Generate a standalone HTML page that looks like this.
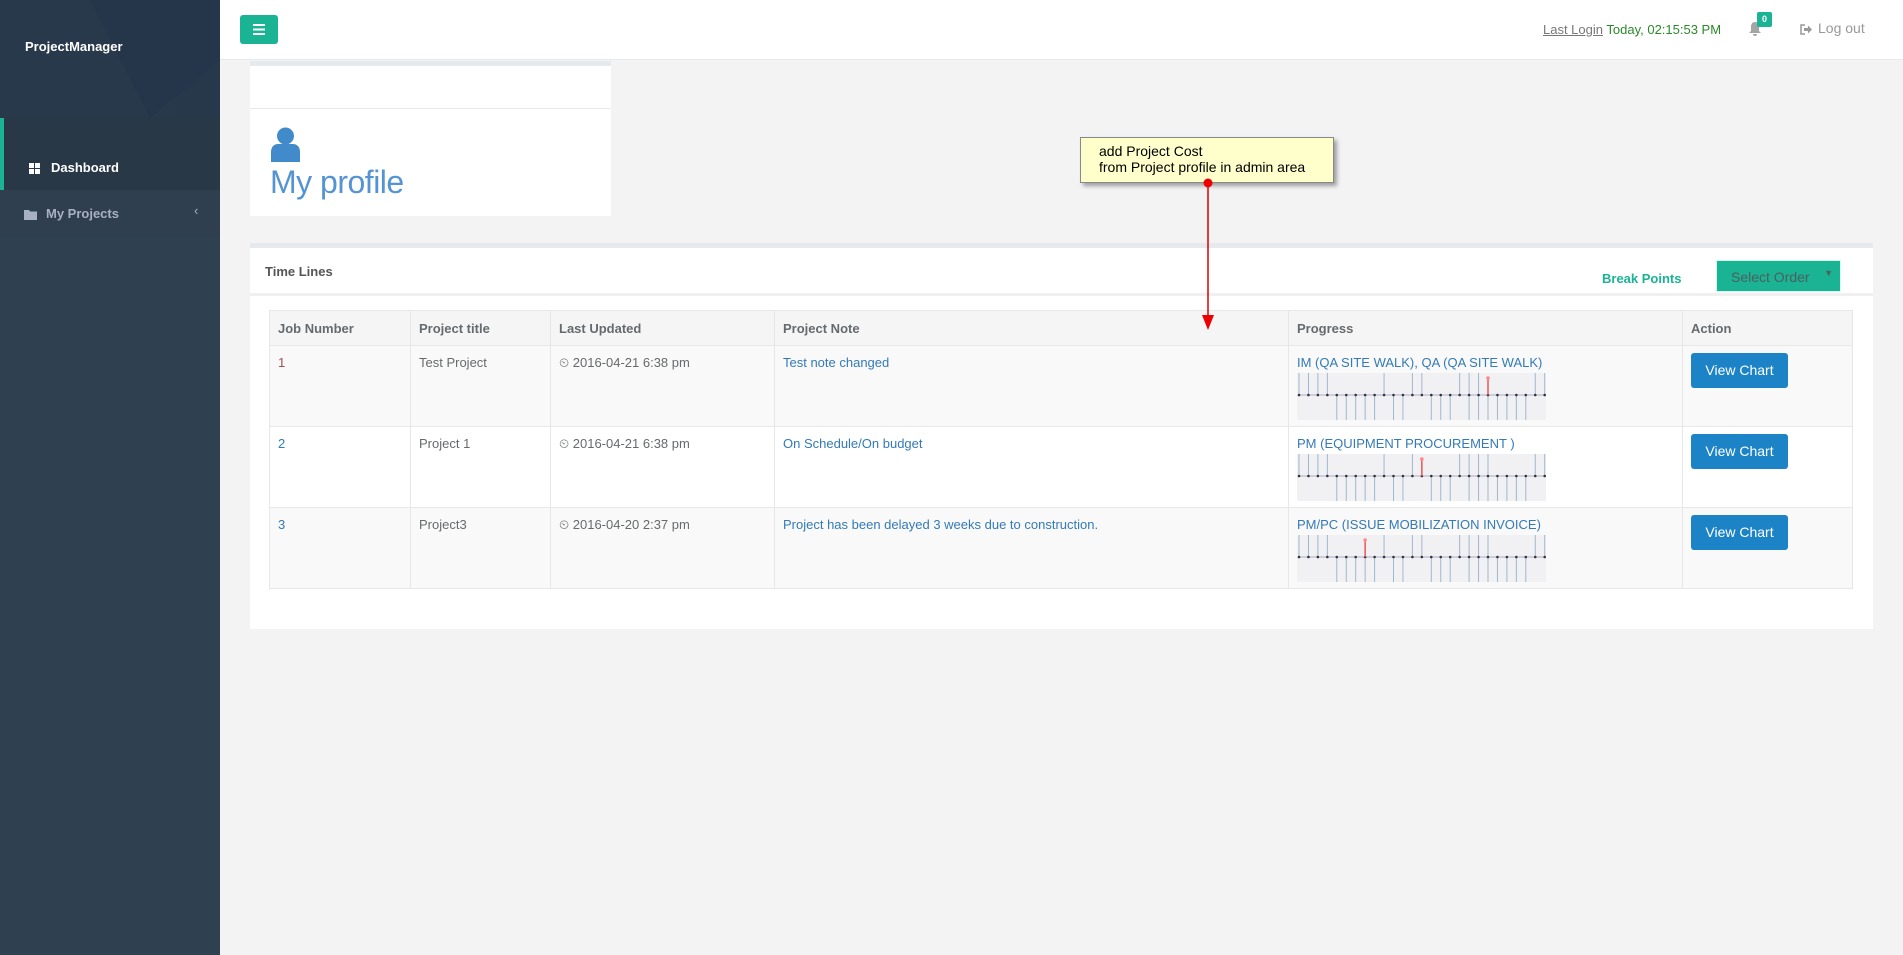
<!DOCTYPE html>
<html><head><meta charset="utf-8"><style>
*{box-sizing:border-box;margin:0;padding:0}
body{width:1903px;height:955px;background:#f3f3f4;font-family:"Liberation Sans",sans-serif;font-size:13px;color:#676a6c;position:relative;overflow:hidden}
.abs{position:absolute}
#side{left:0;top:0;width:220px;height:955px;background:#2f4050}
#side .top{left:0;top:0;width:220px;height:118px;background:#27384a;overflow:hidden}
#hdr{left:220px;top:0;width:1683px;height:60px;background:#fff;border-bottom:1px solid #e7eaec}
.box{background:#fff;border-top:5px solid #e7eaec}
table{border-collapse:collapse;position:absolute;left:269px;top:310px;width:1584px}
td,th{border:1px solid #e7e7e7;text-align:left;vertical-align:top;padding:0 8px}
th{height:35px;background:#f5f5f6;font-weight:bold;vertical-align:middle;color:#676a6c}
td{height:81px;padding-top:9px}
tr.o td{background:#f9f9f9}
tr.e td{background:#fff}
a{color:#337ab7;text-decoration:none}
.btn{display:inline-block;background:#1c84c6;color:#fff;border-radius:3px;width:97px;height:35px;line-height:35px;text-align:center;font-size:14px;margin-top:-2px}
</style></head><body>
<div id="side" class="abs">
 <div class="top abs"><svg width="220" height="118"><polygon points="0,0 110,0 180,118 0,118" fill="#2a3b4d" opacity=".6"/><polygon points="90,0 220,0 220,60 150,118" fill="#24344a" opacity=".5"/></svg></div>
 <div class="abs" style="left:25px;top:39px;color:#fff;font-weight:bold;font-size:13px">ProjectManager</div>
 <div class="abs" style="left:0;top:118px;width:220px;height:72px;background:#293846;border-left:4px solid #1ab394"></div>
 <div class="abs" style="left:29px;top:162px;width:12px;height:11px"><svg width="12" height="11"><rect x="0" y="0" width="5" height="5" fill="#fff"/><rect x="6" y="0" width="5" height="5" fill="#fff"/><rect x="0" y="6" width="5" height="5" fill="#fff"/><rect x="6" y="6" width="5" height="5" fill="#fff"/></svg></div>
 <div class="abs" style="left:51px;top:160px;color:#fff;font-weight:bold;font-size:13px">Dashboard</div>
 <div class="abs" style="left:0;top:190px;width:220px;height:47px;background:#2f3f50"></div>
 <div class="abs" style="left:24px;top:208px"><svg width="13" height="11"><path d="M0 1h5l1 1.5h7v8.5h-13z" fill="#a7b1c2"/></svg></div>
 <div class="abs" style="left:46px;top:206px;color:#a7b1c2;font-weight:bold;font-size:13px">My Projects</div>
 <div class="abs" style="left:194px;top:203px;color:#a7b1c2;font-size:13px">‹</div>
</div>
<div id="hdr" class="abs">
 <div class="abs" style="left:20px;top:15px;width:38px;height:29px;background:#1ab394;border-radius:3px"><svg width="38" height="29"><rect x="13" y="9" width="12" height="2" fill="#fff"/><rect x="13" y="13.5" width="12" height="2" fill="#fff"/><rect x="13" y="18" width="12" height="2" fill="#fff"/></svg></div>
 <div class="abs" style="left:1323px;top:22px;font-size:13px"><span style="text-decoration:underline;color:#777">Last Login</span> <span style="color:#2a8a2a">Today, 02:15:53 PM</span></div>
 <div class="abs" style="left:1528px;top:21px"><svg width="14" height="15"><path d="M7 1c3 0 4 2.5 4 5v4l2 2H1l2-2V6c0-2.5 1-5 4-5z M5 13h4a2 2 0 0 1-4 0z" fill="#a5a5a5"/></svg></div>
 <div class="abs" style="left:1537px;top:12px;width:15px;height:15px;background:#1ab394;color:#fff;font-size:9px;font-weight:bold;text-align:center;line-height:15px;border-radius:2px">0</div>
 <div class="abs" style="left:1580px;top:23px"><svg width="13" height="11"><path d="M5 1H1v9h4" stroke="#999" fill="none" stroke-width="1.5"/><path d="M4 4h4V1.5l4 4-4 4V7H4z" fill="#999"/></svg></div>
 <div class="abs" style="left:1598px;top:20px;color:#999;font-size:14px">Log out</div>
</div>
<div class="abs box" style="left:250px;top:61px;width:361px;height:155px">
 <div style="height:43px;border-bottom:1px solid #e7eaec"></div>
 <div class="abs" style="left:20px;top:61px"><svg width="31" height="35"><circle cx="15.5" cy="9" r="8.5" fill="#428bca"/><path d="M1 35v-10c0-5 3-8 7-8h15c4 0 7 3 7 8v10z" fill="#428bca"/></svg></div>
 <div class="abs" style="left:20px;top:98px;font-size:32px;color:#5594d2;font-weight:300;letter-spacing:-0.5px">My profile</div>
</div>
<div class="abs box" style="left:250px;top:243px;width:1623px;height:386px">
 <div style="height:48px;border-bottom:1px solid #e7eaec;border-bottom-width:3px;border-color:#f0f0f0"></div>
 <div class="abs" style="left:15px;top:16px;font-weight:bold;font-size:13px;color:#555">Time Lines</div>
 <div class="abs" style="left:1352px;top:23px;font-weight:bold;font-size:13px;color:#1ab394">Break Points</div>
 <div class="abs" style="left:1466px;top:12px;width:125px;height:32px;background:#1ab394;border:1px solid #cfe;"><span class="abs" style="left:14px;top:8px;color:#4f5f5c;font-size:14px">Select Order</span><span class="abs" style="right:7px;top:7px;color:#4f5f5c;font-size:9px">▼</span></div>
</div>
<table>
<tr><th style="width:141px">Job Number</th><th style="width:140px">Project title</th><th style="width:224px">Last Updated</th><th style="width:514px">Project Note</th><th style="width:394px">Progress</th><th>Action</th></tr>
<tr class="o"><td><a style="color:#a05050">1</a></td><td>Test Project</td><td>⏲ 2016-04-21 6:38 pm</td><td><a>Test note changed</a></td><td><a>IM (QA SITE WALK), QA (QA SITE WALK)</a><div class="ch" data-r="20"></div></td><td><span class="btn">View Chart</span></td></tr>
<tr class="e"><td><a>2</a></td><td>Project 1</td><td>⏲ 2016-04-21 6:38 pm</td><td><a>On Schedule/On budget</a></td><td><a>PM (EQUIPMENT PROCUREMENT )</a><div class="ch" data-r="13"></div></td><td><span class="btn">View Chart</span></td></tr>
<tr class="o"><td><a>3</a></td><td>Project3</td><td>⏲ 2016-04-20 2:37 pm</td><td><a>Project has been delayed 3 weeks due to construction.</a></td><td><a>PM/PC (ISSUE MOBILIZATION INVOICE)</a><div class="ch" data-r="7"></div></td><td><span class="btn">View Chart</span></td></tr>
</table>
<div class="abs" style="left:1080px;top:137px;width:254px;height:46px;background:#ffffcc;border:1px solid #888;box-shadow:3px 3px 4px rgba(0,0,0,.35);font-family:'Liberation Sans',sans-serif;font-size:14px;color:#000;padding:5px 0 0 18px;line-height:16px">add Project Cost<br>from Project profile in admin area</div>
<svg class="abs" style="left:1195px;top:175px" width="30" height="160"><line x1="13" y1="8" x2="13" y2="145" stroke="#d00" stroke-width="1.5"/><circle cx="13" cy="8" r="4.5" fill="#e00"/><polygon points="7,140 19,140 13,155" fill="#e00"/></svg>
<script>
var up=[0,1,2,3,9,12,13,17,18,19,20,25,26],dn=[4,5,6,7,8,10,11,14,15,16,18,19,20,21,22,23,24];
document.querySelectorAll('.ch').forEach(function(d){var r=+d.dataset.r,s='<svg width="249" height="47" style="display:block;margin-top:3px;background:#f1f1f3">';
for(var i=0;i<27;i++){var x=2+i*9.45;if(up.indexOf(i)>=0&&i!=r)s+='<line x1="'+x+'" y1="0" x2="'+x+'" y2="22" stroke="#9db8d0"/>';if(dn.indexOf(i)>=0)s+='<line x1="'+x+'" y1="22" x2="'+x+'" y2="47" stroke="#9db8d0"/>';}
s+='<line x1="2" y1="22" x2="248" y2="22" stroke="#aac" stroke-width="1"/>';
for(var i=0;i<27;i++){s+='<circle cx="'+(2+i*9.45)+'" cy="22" r="1.3" fill="#333"/>';}
var rx=2+r*9.45;s+='<line x1="'+rx+'" y1="5" x2="'+rx+'" y2="22" stroke="#e55" stroke-width="1.5"/><circle cx="'+rx+'" cy="5" r="1.8" fill="#f88"/></svg>';d.innerHTML=s;});
</script>
</body></html>
